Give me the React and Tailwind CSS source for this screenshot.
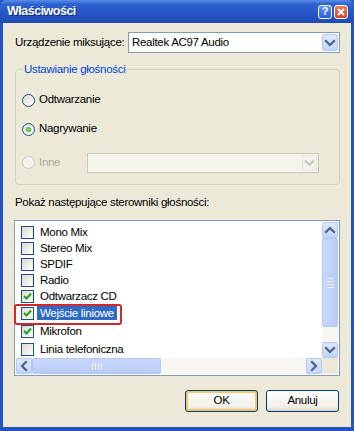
import React from "react";

const font = { fontFamily: '"Liberation Sans", Arial, sans-serif' };

function Chevron({ dir = "down", color = "#4d6185", disabled }) {
  const c = disabled ? "#c9c7ba" : color;
  const paths = {
    down: "M3 5 L7 9 L11 5",
    up: "M3 9 L7 5 L11 9",
    left: "M9 3 L5 7 L9 11",
    right: "M5 3 L9 7 L5 11",
  };
  return (
    <svg width="14" height="14" viewBox="0 0 14 14">
      <path d={paths[dir]} fill="none" stroke={c} strokeWidth="2.2" strokeLinecap="square" />
    </svg>
  );
}

function ArrowBtn({ dir, disabled, className = "" }) {
  return (
    <div
      className={
        "flex items-center justify-center rounded-[2px] border " +
        (disabled
          ? "border-[#e6e4dc] bg-[#f3f2ec] "
          : "border-[#b4c8f4] bg-[linear-gradient(to_bottom,#dfe8fe,#c3d4fb)] ") +
        className
      }
    >
      <Chevron dir={dir} disabled={disabled} />
    </div>
  );
}

function Radio({ checked, disabled }) {
  return (
    <div
      className={
        "w-[13px] h-[13px] rounded-full border flex items-center justify-center shrink-0 " +
        (disabled
          ? "border-[#cac8bb] bg-[#f5f4ee]"
          : "border-[#1c5180] bg-[linear-gradient(135deg,#dcd9cf,#ffffff)]")
      }
    >
      {checked && (
        <div className="w-[5px] h-[5px] rounded-full bg-[radial-gradient(circle,#8ee06f,#2fa32b)]" />
      )}
    </div>
  );
}

function Check({ checked }) {
  return (
    <div className="w-[13px] h-[13px] border border-[#1c5180] bg-[linear-gradient(135deg,#dcd9cf,#ffffff)] flex items-center justify-center shrink-0">
      {checked && (
        <svg width="9" height="9" viewBox="0 0 9 9">
          <path d="M1 4 L3.5 6.5 L8 1.5" fill="none" stroke="#21a121" strokeWidth="2" />
        </svg>
      )}
    </div>
  );
}

const items = [
  { t: "Mono Mix", c: false, h: "h-[16px]" },
  { t: "Stereo Mix", c: false, h: "h-[16px]" },
  { t: "SPDIF", c: false, h: "h-[16px]" },
  { t: "Radio", c: false, h: "h-[16px]" },
  { t: "Odtwarzacz CD", c: true, h: "h-[16px]" },
  { t: "Wejście liniowe", c: true, h: "h-[18px]", sel: true },
  { t: "Mikrofon", c: true, h: "h-[18px]" },
  { t: "Linia telefoniczna", c: false, h: "h-[18px]" },
];

export default function App() {
  return (
    <div style={font} className="w-[354px] h-[431px] flex flex-col bg-[#2553c4] text-[11.5px] tracking-[-0.3px] text-black overflow-hidden">
      {/* Title bar */}
      <div className="h-[23px] shrink-0 flex items-center pl-[7px] pr-[6px] rounded-t-[6px] bg-[linear-gradient(to_bottom,#5a8ee8,#2d62d0_18%,#2656c6_60%,#1f4bb2)]">
        <span className="flex-1 text-white font-bold text-[12.5px] tracking-[-0.5px] [text-shadow:1px_1px_0_#0a2a7a]">Właściwości</span>
        <div className="w-[14px] h-[14px] rounded-[3px] border border-white bg-[linear-gradient(to_bottom,#5d8ff0,#2a5ed8)] flex items-center justify-center text-white font-bold text-[11px] leading-none mr-[2px]">?</div>
        <div className="w-[14px] h-[14px] rounded-[3px] border border-white bg-[linear-gradient(to_bottom,#e9805f,#d2471f)] flex items-center justify-center">
          <svg width="8" height="8" viewBox="0 0 8 8">
            <path d="M1 1 L7 7 M7 1 L1 7" stroke="white" strokeWidth="2" />
          </svg>
        </div>
      </div>

      {/* Body */}
      <div className="flex-1 mx-[3px] mb-[4px] bg-[#ece9d8] pl-[12px] pr-[11px] pt-[9px] flex flex-col">
        {/* Mixer row */}
        <div className="flex items-center h-[21px]">
          <span className="flex-1 whitespace-nowrap">Urządzenie miksujące:</span>
          <div className="w-[212px] h-[21px] border border-[#7f9db9] bg-white flex items-center pl-[3px] pr-[1px]">
            <span className="flex-1">Realtek AC97 Audio</span>
            <ArrowBtn dir="down" className="w-[16px] h-[17px]" />
          </div>
        </div>

        {/* Group box */}
        <div className="relative mt-[16px] border border-[#d0d0bf] rounded-[4px] pt-[22px] pb-[11px] pl-[6px] pr-[20px]">
          <span className="absolute left-[7px] top-[-8px] px-[1px] bg-[#ece9d8] text-[#0046d5] leading-[14px]">Ustawianie głośności</span>
          <div className="flex items-center h-[16px] gap-[4px]">
            <Radio />
            <span>Odtwarzanie</span>
          </div>
          <div className="flex items-center h-[16px] gap-[4px] mt-[13px]">
            <Radio checked />
            <span>Nagrywanie</span>
          </div>
          <div className="flex items-center h-[20px] mt-[16px]">
            <div className="w-[65px] flex items-center gap-[4px] self-start mt-[1px]">
              <Radio disabled />
              <span className="text-[#aca899]">Inne</span>
            </div>
            <div className="flex-1 h-[20px] border border-[#c9c7ba] bg-[#f5f4ea] flex items-center justify-end pr-[1px]">
              <ArrowBtn dir="down" disabled className="w-[15px] h-[16px]" />
            </div>
          </div>
        </div>

        <div className="mt-[10px] h-[14px] leading-[14px] whitespace-nowrap">Pokaż następujące sterowniki głośności:</div>

        {/* Listbox */}
        <div className="mt-[11px] -ml-[1px] h-[156px] border border-[#7f9db9] bg-white p-[1px] flex flex-col">
          <div className="flex-1 flex min-h-0">
            <div className="flex-1 pt-[2px] pl-[5px]">
              {items.map((it) => (
                <div key={it.t} className={"relative flex items-center " + it.h}>
                  <Check checked={it.c} />
                  <span
                    className={
                      "ml-[3px] px-[3px] leading-[14px] whitespace-nowrap " +
                      (it.sel ? "bg-[#316ac5] text-white" : "")
                    }
                  >
                    {it.t}
                  </span>
                  {it.sel && (
                    <div className="absolute left-[-7px] top-0 w-[108px] h-[21px] rounded-[3px] border-2 border-[#d4262b]" />
                  )}
                </div>
              ))}
            </div>
            {/* vertical scrollbar */}
            <div className="w-[16px] flex flex-col bg-[#f7f6f1]">
              <ArrowBtn dir="up" className="h-[16px]" />
              <div className="h-[89px] rounded-[2px] border border-[#b4c8f4] bg-[linear-gradient(to_right,#c9d8fc,#b9cbf7)] flex flex-col items-center justify-center gap-[2px]">
                <div className="w-[7px] h-[1px] bg-[#eef3fe]" />
                <div className="w-[7px] h-[1px] bg-[#eef3fe]" />
                <div className="w-[7px] h-[1px] bg-[#eef3fe]" />
                <div className="w-[7px] h-[1px] bg-[#eef3fe]" />
              </div>
              <div className="flex-1" />
              <ArrowBtn dir="down" className="h-[16px]" />
            </div>
          </div>
          {/* horizontal scrollbar */}
          <div className="h-[16px] flex">
            <div className="flex-1 flex bg-[#f7f6f1]">
              <ArrowBtn dir="left" className="w-[16px]" />
              <div className="w-[129px] rounded-[2px] border border-[#b4c8f4] bg-[linear-gradient(to_bottom,#c9d8fc,#b9cbf7)] flex items-center justify-center gap-[2px]">
                <div className="w-[1px] h-[7px] bg-[#eef3fe]" />
                <div className="w-[1px] h-[7px] bg-[#eef3fe]" />
                <div className="w-[1px] h-[7px] bg-[#eef3fe]" />
                <div className="w-[1px] h-[7px] bg-[#eef3fe]" />
              </div>
              <div className="flex-1" />
              <ArrowBtn dir="right" className="w-[16px]" />
            </div>
            <div className="w-[16px] bg-[#ece9d8]" />
          </div>
        </div>

        {/* Buttons */}
        <div className="mt-[14px] flex justify-end gap-[8px] pr-[1px]">
          <button className="w-[73px] h-[22px] rounded-[3px] border border-[#003c74] bg-[linear-gradient(to_bottom,#ffffff,#f0efe8_80%,#d6d0c5)] shadow-[inset_0_0_0_2px_#f6c66a]">OK</button>
          <button className="w-[73px] h-[22px] rounded-[3px] border border-[#003c74] bg-[linear-gradient(to_bottom,#ffffff,#f0efe8_80%,#d6d0c5)]">Anuluj</button>
        </div>
      </div>
    </div>
  );
}
